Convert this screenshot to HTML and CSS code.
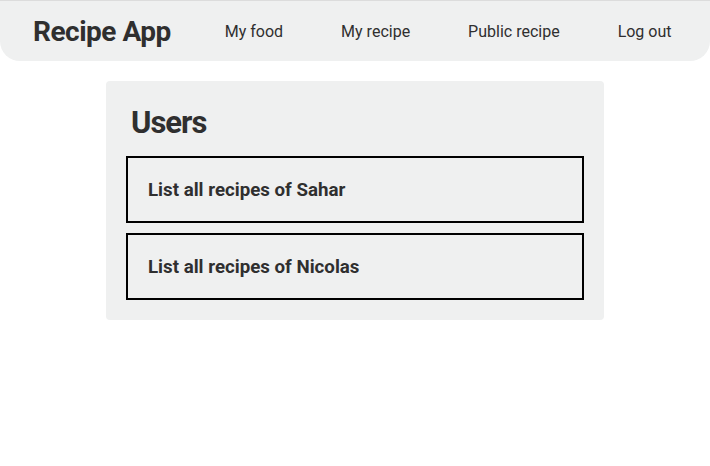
FILE: index.html
```html
<!DOCTYPE html>
<html>
<head>
<meta charset="utf-8">
<link rel="stylesheet" href="styles.css">
</head>
<body>
<nav class="navbar">
  <a class="brand" href="#">Recipe App</a>
  <ul class="nav-links">
    <li><a href="#">My food</a></li>
    <li><a href="#">My recipe</a></li>
    <li><a href="#">Public recipe</a></li>
    <li><a href="#">Log out</a></li>
  </ul>
</nav>
<main class="card">
  <h2 class="card-title">Users</h2>
  <ul class="user-list">
    <li class="user-item"><a href="#">List all recipes of Sahar</a></li>
    <li class="user-item"><a href="#">List all recipes of Nicolas</a></li>
  </ul>
</main>
</body>
</html>
```
FILE: styles.css
```css
* { box-sizing: border-box; }
body {
  margin: 0;
  font-family: Roboto, "Liberation Sans", sans-serif;
  color: #2f2f2f;
  background: #fff;
}
a { color: inherit; text-decoration: none; }
.navbar {
  height: 61px;
  background: #eff0f0;
  border-top: 1px solid #dcdcdc;
  border-radius: 0 0 20px 20px;
  display: flex;
  align-items: center;
  padding: 0 0 0 33px;
}
.brand {
  font-size: 28px;
  font-weight: 700;
  letter-spacing: -0.5px;
  margin-right: 25px;
}
.nav-links {
  list-style: none;
  display: flex;
  margin: 0;
  padding: 0;
}
.nav-links a {
  display: block;
  padding: 0 29px;
  font-size: 16px;
}
.card {
  width: 498px;
  margin: 20px auto 0;
  background: #eff0f0;
  border-radius: 4px;
  padding: 23px 20px 20px;
}
.card-title {
  margin: 0 0 15px 5px;
  font-size: 31px;
  letter-spacing: -1px;
  font-weight: 700;
}
.user-list {
  list-style: none;
  margin: 0;
  padding: 0;
  display: flex;
  flex-direction: column;
  gap: 10px;
}
.user-item {
  border: 2px solid #000;
  height: 67px;
  display: flex;
  align-items: center;
  padding: 0 20px;
  font-size: 18.72px;
  font-weight: 700;
}
```
